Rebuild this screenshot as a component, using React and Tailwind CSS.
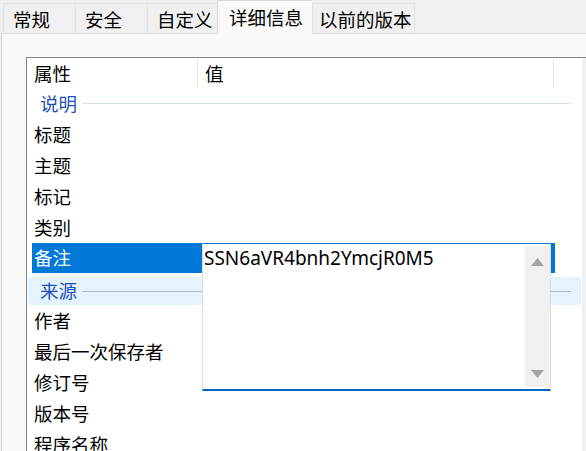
import React from 'react'

const tabs = [
    { label: '常规', w: 'w-[72px]' },
    { label: '安全', w: 'w-[72px]' },
    { label: '自定义', w: 'w-[70px]' },
    { label: '详细信息', w: 'w-[95px]', active: true },
    { label: '以前的版本', w: 'w-[103px]', last: true },
]

const GroupRow = ({ label, hover }) => {
    if (hover) {
        return (
            <div className="h-[31px] pt-[3px] pl-px pr-px">
                <div className="h-[28px] rounded-[2px] bg-[#e5f3ff] flex items-center pl-[12px] pr-[10px]">
                    <span className="text-[#1f4fb8]">{label}</span>
                    <div className="flex-1 h-px bg-[#a9bcd6] ml-[5px]"></div>
                </div>
            </div>
        )
    }
    return (
        <div className="h-[31px] flex items-center pl-[13px] pr-[11px]">
            <span className="text-[#1f4fb8]">{label}</span>
            <div className="flex-1 h-px bg-[#d5dfee] ml-[5px]"></div>
        </div>
    )
}

const ItemRow = ({ label }) => (
    <div className="h-[31px] flex items-center pl-[7px]">{label}</div>
)

const App = () => {
    return (
        <div className="w-[586px] h-[451px] overflow-hidden bg-[#f0f0f0] flex flex-col text-[18.5px] text-black font-['Noto_Sans','Noto_Sans_CJK_SC',sans-serif]">
            {/* tab strip */}
            <div className="h-[33px] flex items-end pl-[3px] shrink-0">
                {tabs.map((t) =>
                    t.active ? (
                        <div key={t.label} className={`${t.w} h-[34px] -mb-px relative z-10 bg-[#f9f9f9] border-l border-t border-[#dadada] flex items-center pl-[11px] pt-px`}>
                            {t.label}
                        </div>
                    ) : (
                        <div key={t.label} className={`${t.w} h-[30px] bg-[#f0f0f0] border-l border-t border-[#e3e3e3] ${t.last ? 'border-r pl-[6px]' : 'pl-[9px]'} flex items-center pt-[3px]`}>
                            {t.label}
                        </div>
                    )
                )}
            </div>

            {/* panel */}
            <div className="flex-1 ml-px bg-[#f9f9f9] border-t border-l border-[#d9d9d9] pl-[24px] pt-[23px] flex min-h-0">
                <div className="flex-1 bg-white border-l border-t border-[#828790] flex min-h-0 overflow-hidden">
                    <div className="w-[555px] shrink-0 relative">
                        {/* header */}
                        <div className="h-[30px] flex">
                            <div className="w-[171px] pl-[7px] flex items-center border-r border-[#e5e5e5] mt-px">属性</div>
                            <div className="w-[356px] pl-[7px] flex items-center border-r border-[#e5e5e5] mt-px">值</div>
                        </div>

                        <GroupRow label="说明" />
                        <ItemRow label="标题" />
                        <ItemRow label="主题" />
                        <ItemRow label="标记" />
                        <ItemRow label="类别" />
                        <div className="h-[31px] flex pl-[5px]">
                            <div className="w-[523px] h-[30px] bg-[#0078d7] text-white flex items-center pl-[2px]">备注</div>
                        </div>
                        <GroupRow label="来源" hover />
                        <ItemRow label="作者" />
                        <ItemRow label="最后一次保存者" />
                        <ItemRow label="修订号" />
                        <ItemRow label="版本号" />
                        <ItemRow label="程序名称" />

                        {/* value editor */}
                        <div className="absolute left-[175px] top-[185px] w-[349px] h-[148px] bg-white border-l border-r border-[#dcdcdc] border-t border-t-[#0078d7] border-b-2 border-b-[#0067c0] flex">
                            <div className="flex-1 pl-[1px] leading-[28px] text-[19px]">SSN6aVR4bnh2YmcjR0M5</div>
                            <div className="w-[25px] my-[2px] bg-[#f0f0f0] flex flex-col items-center justify-between pt-[12px] pb-[9px]">
                                <svg width="13" height="8" viewBox="0 0 13 8">
                                    <polygon points="6.5,0 13,8 0,8" fill="#a3a3a3" />
                                </svg>
                                <svg width="13" height="8" viewBox="0 0 13 8">
                                    <polygon points="0,0 13,0 6.5,8" fill="#a3a3a3" />
                                </svg>
                            </div>
                        </div>
                    </div>
                    <div className="flex-1 bg-[#f0f0f0]"></div>
                </div>
            </div>
        </div>
    )
}

export default App
